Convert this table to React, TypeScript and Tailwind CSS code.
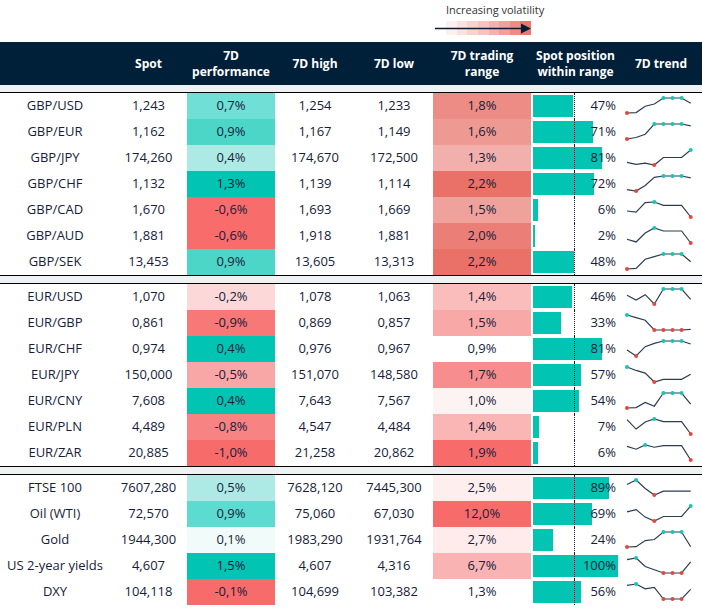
import React from 'react';

type Row = {
  name: string;
  spot: string;
  perf: string;
  perfBg: string;
  high: string;
  low: string;
  range: string;
  rangeBg: string;
  pos: number;
  trend: number[];
};

const gbp: Row[] = [
  { name: 'GBP/USD', spot: '1,243', perf: '0,7%', perfBg: 'bg-[#70dfd5]', high: '1,254', low: '1,233', range: '1,8%', rangeBg: 'bg-[#ec8c84]', pos: 47, trend: [0, 0.03, 0.45, 0.6, 1, 1, 1, 0.65] },
  { name: 'GBP/EUR', spot: '1,162', perf: '0,9%', perfBg: 'bg-[#4cd6c8]', high: '1,167', low: '1,149', range: '1,6%', rangeBg: 'bg-[#ee9a93]', pos: 71, trend: [0, 0.1, 0.32, 1, 1, 1, 1, 0.87] },
  { name: 'GBP/JPY', spot: '174,260', perf: '0,4%', perfBg: 'bg-[#aeeae5]', high: '174,670', low: '172,500', range: '1,3%', rangeBg: 'bg-[#f1b0ab]', pos: 81, trend: [0.17, 0.04, 0.13, 0, 0.5, 0.5, 0.5, 1] },
  { name: 'GBP/CHF', spot: '1,132', perf: '1,3%', perfBg: 'bg-[#01c4b2]', high: '1,139', low: '1,114', range: '2,2%', rangeBg: 'bg-[#e97168]', pos: 72, trend: [0.09, 0, 0.37, 0.91, 1, 1, 1, 0.87] },
  { name: 'GBP/CAD', spot: '1,670', perf: '-0,6%', perfBg: 'bg-[#f86c6c]', high: '1,693', low: '1,669', range: '1,5%', rangeBg: 'bg-[#efa19b]', pos: 6, trend: [0.4, 0.33, 0.96, 1, 0.78, 0.78, 0.78, 0] },
  { name: 'GBP/AUD', spot: '1,881', perf: '-0,6%', perfBg: 'bg-[#f86c6c]', high: '1,918', low: '1,881', range: '2,0%', rangeBg: 'bg-[#eb7f77]', pos: 2, trend: [0.25, 0.07, 0.66, 1, 0.8, 0.8, 0.8, 0] },
  { name: 'GBP/SEK', spot: '13,453', perf: '0,9%', perfBg: 'bg-[#4cd6c8]', high: '13,605', low: '13,313', range: '2,2%', rangeBg: 'bg-[#e97168]', pos: 48, trend: [0, 0.04, 0.65, 0.83, 1, 1, 1, 0.48] },
];

const eur: Row[] = [
  { name: 'EUR/USD', spot: '1,070', perf: '-0,2%', perfBg: 'bg-[#fcd8d8]', high: '1,078', low: '1,063', range: '1,4%', rangeBg: 'bg-[#fbbcbc]', pos: 46, trend: [0.58, 0.27, 0.62, 0, 1, 1, 1, 0.31] },
  { name: 'EUR/GBP', spot: '0,861', perf: '-0,9%', perfBg: 'bg-[#f87777]', high: '0,869', low: '0,857', range: '1,5%', rangeBg: 'bg-[#f9a8a8]', pos: 33, trend: [1, 0.83, 0.65, 0, 0, 0, 0, 0.04] },
  { name: 'EUR/CHF', spot: '0,974', perf: '0,4%', perfBg: 'bg-[#01c4b2]', high: '0,976', low: '0,967', range: '0,9%', rangeBg: 'bg-white', pos: 81, trend: [0.4, 0, 0.62, 0.84, 1, 1, 1, 0.8] },
  { name: 'EUR/JPY', spot: '150,000', perf: '-0,5%', perfBg: 'bg-[#f9a6a6]', high: '151,070', low: '148,580', range: '1,7%', rangeBg: 'bg-[#f88d8d]', pos: 57, trend: [1, 0.77, 0.59, 0, 0.18, 0.18, 0.18, 0.52] },
  { name: 'EUR/CNY', spot: '7,608', perf: '0,4%', perfBg: 'bg-[#01c4b2]', high: '7,643', low: '7,567', range: '1,0%', rangeBg: 'bg-[#fef3f3]', pos: 54, trend: [0, 0.03, 0.37, 0.12, 1, 1, 1, 0.26] },
  { name: 'EUR/PLN', spot: '4,489', perf: '-0,8%', perfBg: 'bg-[#f88383]', high: '4,547', low: '4,484', range: '1,4%', rangeBg: 'bg-[#fab5b5]', pos: 7, trend: [0.96, 0.33, 0.8, 1, 0.83, 0.83, 0.83, 0] },
  { name: 'EUR/ZAR', spot: '20,885', perf: '-1,0%', perfBg: 'bg-[#f86b6b]', high: '21,258', low: '20,862', range: '1,9%', rangeBg: 'bg-[#f86b6b]', pos: 6, trend: [0.91, 0.72, 1, 0.85, 0.96, 0.96, 0.96, 0] },
];

const other: Row[] = [
  { name: 'FTSE 100', spot: '7607,280', perf: '0,5%', perfBg: 'bg-[#aeeae5]', high: '7628,120', low: '7445,300', range: '2,5%', rangeBg: 'bg-[#ffeeee]', pos: 89, trend: [0.7, 1, 0.43, 0, 0.26, 0.26, 0.26, 0.26] },
  { name: 'Oil (WTI)', spot: '72,570', perf: '0,9%', perfBg: 'bg-[#5cdbd0]', high: '75,060', low: '67,030', range: '12,0%', rangeBg: 'bg-[#f86b6b]', pos: 69, trend: [0.61, 0.76, 0.26, 0, 0.3, 0.3, 0.3, 1] },
  { name: 'Gold', spot: '1944,300', perf: '0,1%', perfBg: 'bg-[#f0fbfa]', high: '1983,290', low: '1931,764', range: '2,7%', rangeBg: 'bg-[#ffebeb]', pos: 24, trend: [0, 0.02, 0.43, 0.5, 1, 1, 1, 0.02] },
  { name: 'US 2-year yields', spot: '4,607', perf: '1,5%', perfBg: 'bg-[#01c4b2]', high: '4,607', low: '4,316', range: '6,7%', rangeBg: 'bg-[#f9b3b3]', pos: 100, trend: [0.89, 1, 0.43, 0.22, 0, 0, 0, 0.74] },
  { name: 'DXY', spot: '104,118', perf: '-0,1%', perfBg: 'bg-[#f86b6b]', high: '104,699', low: '103,382', range: '1,3%', rangeBg: 'bg-white', pos: 56, trend: [0.91, 1, 0.68, 0.77, 0, 0, 0, 0.64] },
];

const cols = 'grid grid-cols-[110px_77px_88px_80px_78px_98px_89px_82px]';

const legendSteps = ['bg-[#fdf0f0]', 'bg-[#fbe1e0]', 'bg-[#f9d2d0]', 'bg-[#f7c2bf]', 'bg-[#f5b1ad]', 'bg-[#f2a09b]', 'bg-[#ef8b85]', 'bg-[#ec766f]'];

const Spark = ({ values }: { values: number[] }) => {
  const pts = values.map((v, i) => [7 + i * 9.1, 20 - v * 15]);
  return (
    <svg width="82" height="26" className="block">
      <polyline
        points={pts.map((p) => p.join(',')).join(' ')}
        fill="none"
        stroke="#2c3d52"
        strokeWidth="1.2"
      />
      {values.map((v, i) =>
        v === 1 || v === 0 ? (
          <circle key={i} cx={pts[i][0]} cy={pts[i][1]} r="2" fill={v === 1 ? '#14c6b4' : '#e5463d'} />
        ) : null
      )}
    </svg>
  );
};

const DataRow = ({ row }: { row: Row }) => (
  <div className={`${cols} h-[26px] text-[13px] text-[#161c3a]`}>
    <div className="flex items-center justify-center">{row.name}</div>
    <div className="flex items-center justify-center">{row.spot}</div>
    <div className={`flex items-center justify-center ${row.perfBg}`}>{row.perf}</div>
    <div className="flex items-center justify-center">{row.high}</div>
    <div className="flex items-center justify-center">{row.low}</div>
    <div className={`flex items-center justify-center ${row.rangeBg}`}>{row.range}</div>
    <div className="relative flex items-center pl-[2px]">
      <div className="h-[22px] bg-[#01c4b2]" style={{ width: `${(row.pos / 100) * 85}px` }} />
      <div className="absolute left-[43px] top-0 bottom-0 border-l border-dotted border-[#161c3a]" />
      <span className="absolute right-[4px] top-0 bottom-0 flex items-center">{row.pos}%</span>
    </div>
    <div className="flex items-center">
      <Spark values={row.trend} />
    </div>
  </div>
);

const Section = ({ rows }: { rows: Row[] }) => (
  <div>
    {rows.map((r) => (
      <DataRow key={r.name} row={r} />
    ))}
  </div>
);

const Divider = () => (
  <div>
    <div className="h-px bg-black" />
    <div className="h-[7px] bg-[#eef2f2]" />
    <div className="h-px bg-black" />
  </div>
);

const Head = ({ children }: { children: React.ReactNode }) => (
  <div className="flex flex-col items-center justify-center">{children}</div>
);

export default function App() {
  return (
    <div className="w-[702px] h-[609px] bg-white font-['Open_Sans',sans-serif] overflow-hidden">
      <div className="h-[42px] pl-[435px] flex flex-col">
        <div className="pl-[11px] pt-[2px] text-[11px] leading-[16px] text-[#333]">Increasing volatility</div>
        <div className="relative mt-[3px] w-[96px] h-[14px] flex">
          <div className="w-[11px]" />
          {legendSteps.map((c) => (
            <div key={c} className={`flex-1 ${c}`} />
          ))}
          <svg width="96" height="14" className="absolute left-0 top-0">
            <line x1="0" y1="7.5" x2="88" y2="7.5" stroke="#0c1a33" strokeWidth="1.3" />
            <polygon points="86,2.5 96,7.5 86,12.5" fill="#0c1a33" />
          </svg>
        </div>
      </div>
      <div className={`${cols} h-[43px] bg-[#00203a] text-white font-bold text-[12px] leading-[16px] text-center`}>
        <div />
        <Head><span>Spot</span></Head>
        <Head><span>7D</span><span>performance</span></Head>
        <Head><span>7D high</span></Head>
        <Head><span>7D low</span></Head>
        <Head><span>7D trading</span><span>range</span></Head>
        <Head><span>Spot position</span><span>within range</span></Head>
        <Head><span>7D trend</span></Head>
      </div>
      <div className="h-[7px] bg-[#eef2f2]" />
      <div className="h-px bg-black" />
      <Section rows={gbp} />
      <Divider />
      <Section rows={eur} />
      <Divider />
      <Section rows={other} />
    </div>
  );
}
